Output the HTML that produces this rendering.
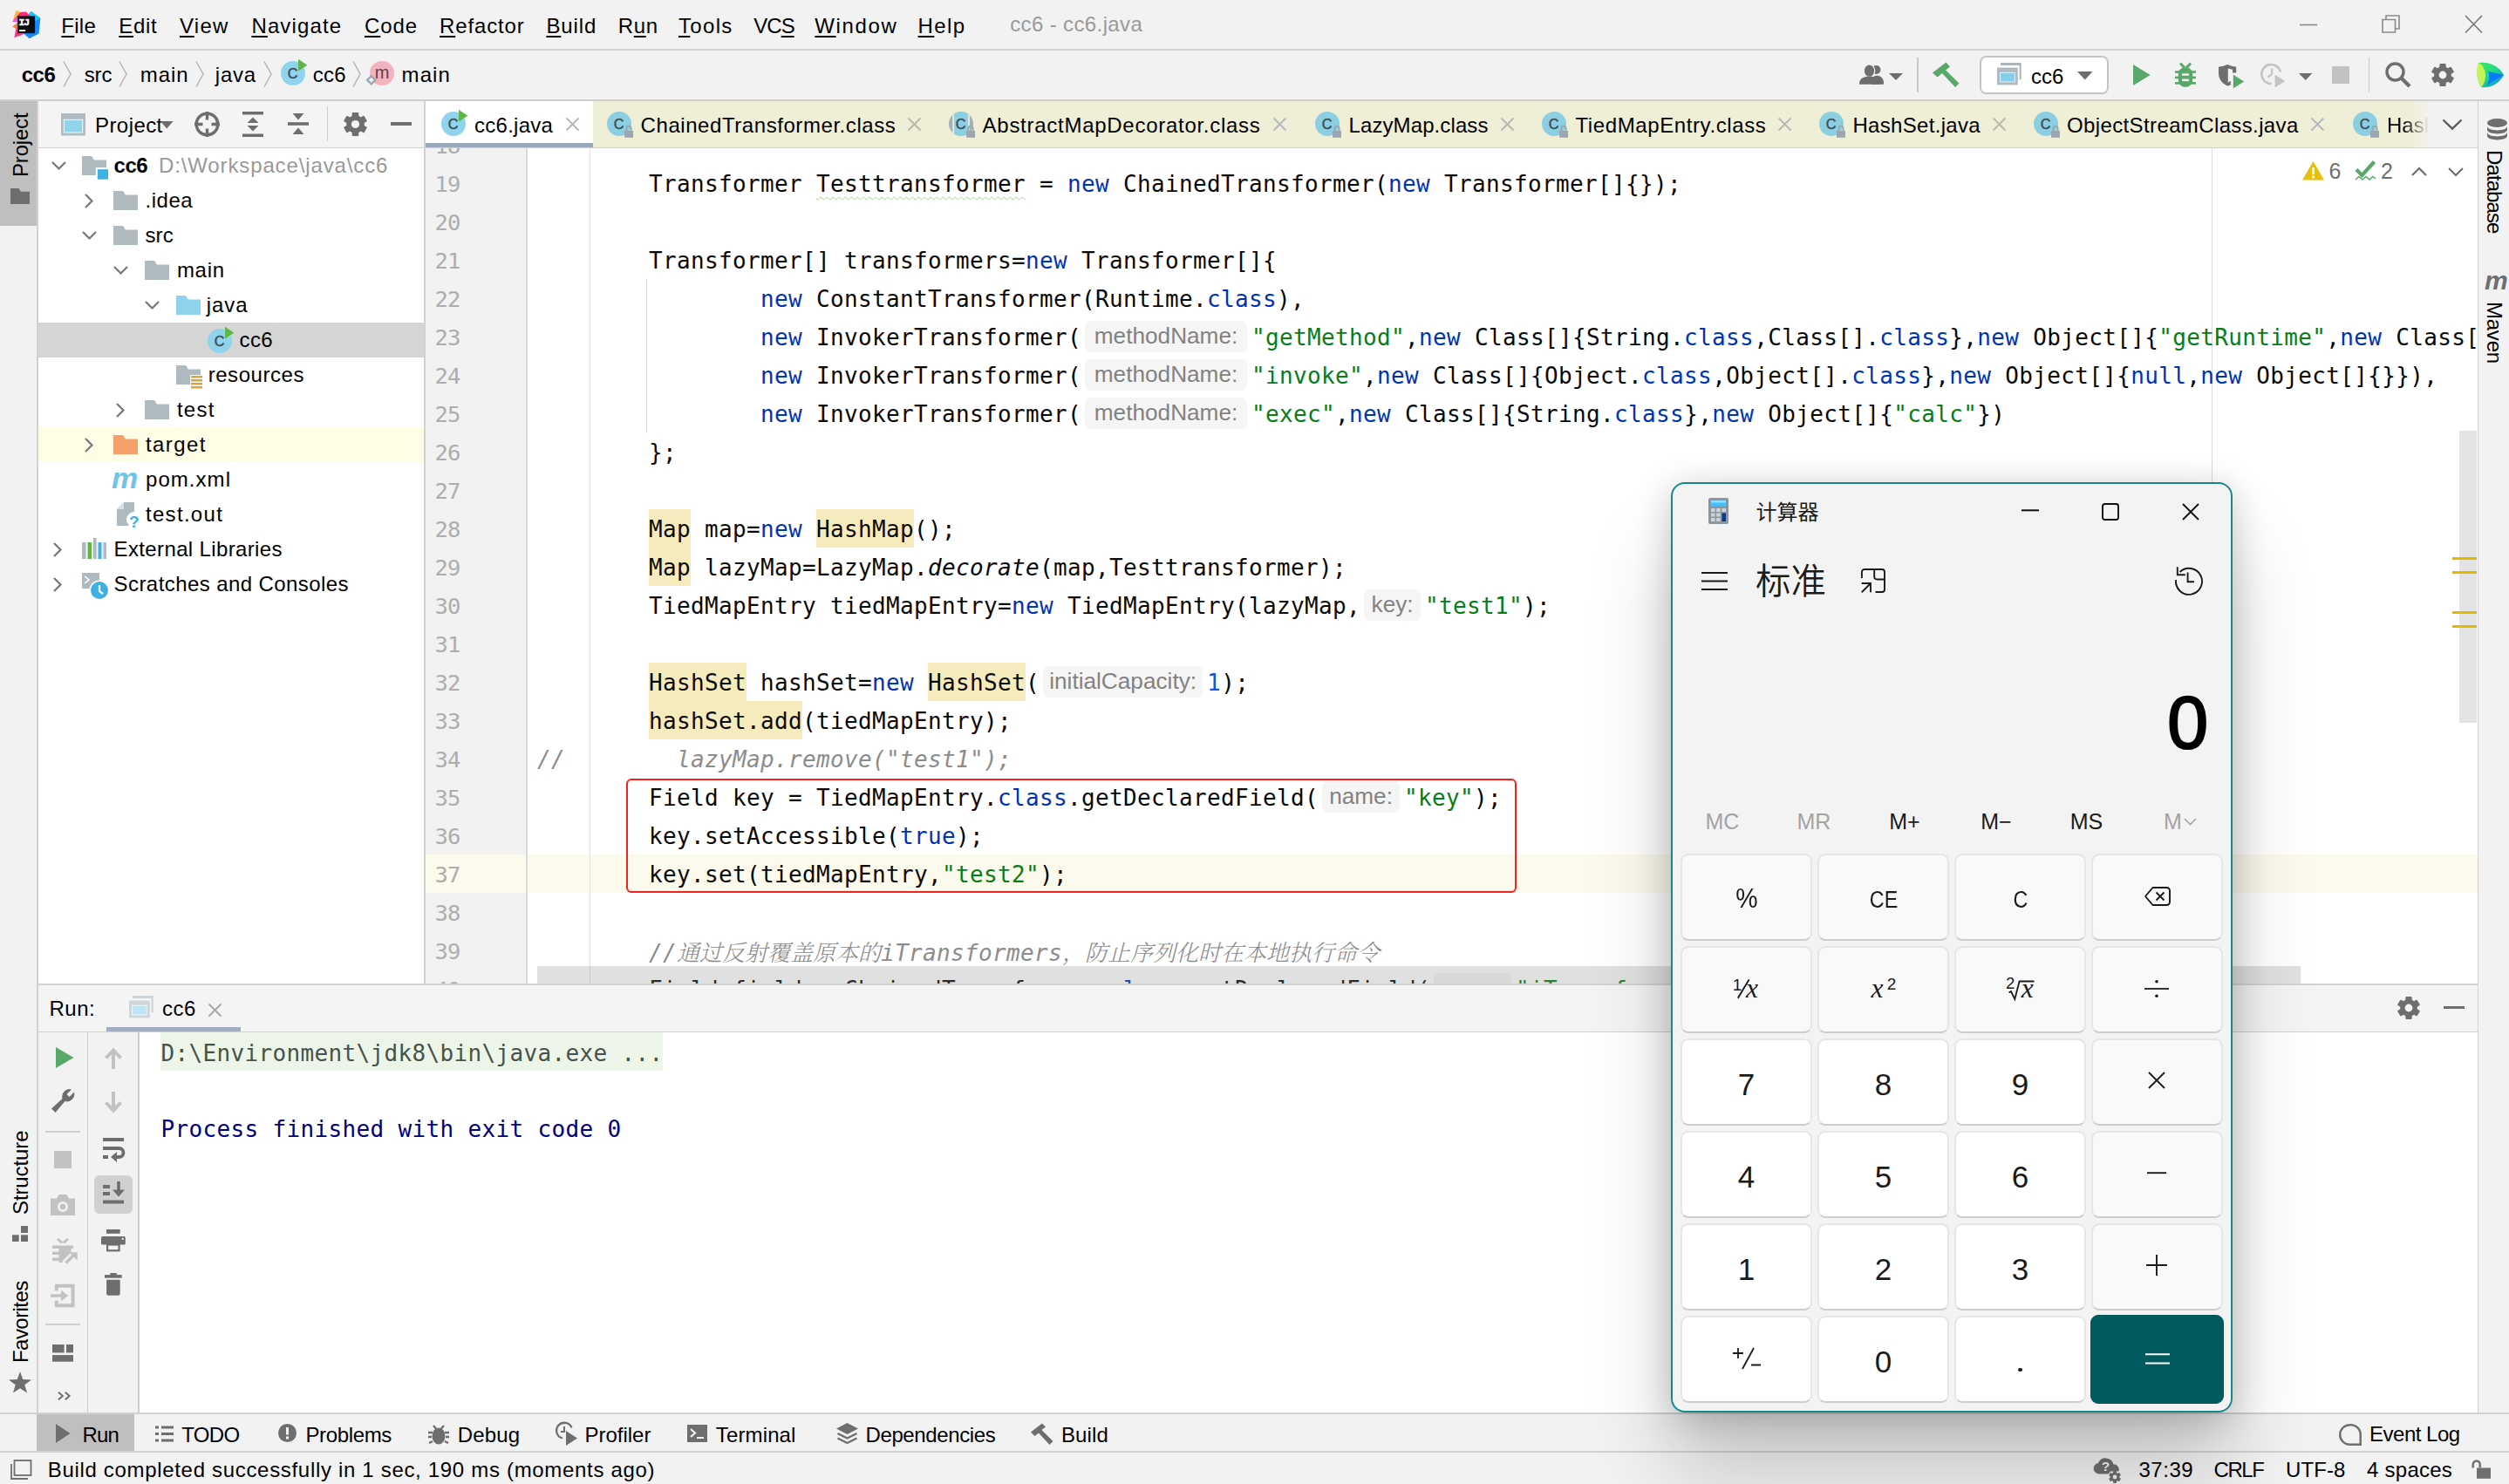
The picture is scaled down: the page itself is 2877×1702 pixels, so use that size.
<!DOCTYPE html>
<html lang="en"><head><meta charset="utf-8"><title>cc6 - cc6.java</title>
<style>
html,body{margin:0;padding:0;}
body{width:2877px;height:1702px;overflow:hidden;position:relative;background:#f2f2f2;font-family:'Liberation Sans', 'Noto Sans CJK SC', sans-serif;}
div,span.t,svg{position:absolute;}
svg{overflow:visible;}
span.t{white-space:pre;line-height:1;}
.code{font-family:'DejaVu Sans Mono', 'Liberation Mono', 'Noto Sans CJK SC', monospace;font-size:26px;letter-spacing:0.347px;white-space:pre;line-height:46px;height:44px;color:#080808;}
.code span{position:static;}
.k{color:#0033b3;} .s{color:#067d17;} .n{color:#1750eb;} .c{color:#8c8c8c;font-style:italic;}
.w{background:#f6ebbc;display:inline-block;height:44px;vertical-align:top;}
.h{display:inline-block;vertical-align:top;position:relative !important;height:36px;margin:4px 5px 0 4px;border-radius:6.5px;background:#f5f5f5;color:#828282;font-family:'Liberation Sans', 'Noto Sans CJK SC', sans-serif;font-size:26.2px;letter-spacing:0;line-height:35px;text-align:center;font-style:normal;}
.zh{font-family:"Noto Serif CJK SC","Noto Sans CJK SC",serif;letter-spacing:0;font-weight:300;}
</style></head>
<body>
<div style="left:0px;top:0px;width:2877px;height:57px;background:#f2f2f2;"></div>
<div style="left:0px;top:56.3px;width:2877px;height:1.8px;background:#d3d3d3;"></div>
<svg style="left:13.9px;top:11.7px;" width="33" height="33" viewBox="0 0 33 33">
<polygon points="1,10.8 4.3,0.2 8.6,0.7 7,8" fill="#fdb73e"/>
<polygon points="0.2,12.7 9,2 15.8,1.4 19.8,5.2 8,13" fill="#ff2e6f"/>
<polygon points="0.2,12.7 7,6.6 7,13.5" fill="#fe4fe6"/>
<polygon points="0.2,18.7 6.4,13.6 6.4,22" fill="#fd7d20"/>
<polygon points="2.4,31.3 4.6,19 7,26 15,26.5" fill="#ff2f86"/>
<polygon points="19.1,4.5 21.5,1 32.3,8.8 30.6,26.5 19.6,32.3 13,26.3" fill="#1689ff"/>
<polygon points="19.1,4.5 21.5,1 32.3,8.8 27,12" fill="#16c4fb"/>
<rect x="6.2" y="6.4" width="19.9" height="19.8" fill="#0b0b0f"/>
<rect x="8.1" y="22.2" width="7" height="1.8" fill="#fff"/>
<text x="7.5" y="16.5" font-size="11.5" font-weight="bold" fill="#fff" stroke="#fff" stroke-width="0.4" font-family="Liberation Mono, DejaVu Sans Mono, monospace" letter-spacing="-1.2">IJ</text>
</svg>
<span class="t" id="t1" style="left:70.3px;top:17.98px;font-size:24px;color:#000;letter-spacing:0.289px;"><u style="text-decoration-thickness:2px;text-underline-offset:3px">F</u>ile</span>
<span class="t" id="t2" style="left:136.3px;top:17.98px;font-size:24px;color:#000;letter-spacing:0.664px;"><u style="text-decoration-thickness:2px;text-underline-offset:3px">E</u>dit</span>
<span class="t" id="t3" style="left:206px;top:17.98px;font-size:24px;color:#000;letter-spacing:1.259px;"><u style="text-decoration-thickness:2px;text-underline-offset:3px">V</u>iew</span>
<span class="t" id="t4" style="left:288.4px;top:17.98px;font-size:24px;color:#000;letter-spacing:1.142px;"><u style="text-decoration-thickness:2px;text-underline-offset:3px">N</u>avigate</span>
<span class="t" id="t5" style="left:418px;top:17.98px;font-size:24px;color:#000;letter-spacing:0.888px;"><u style="text-decoration-thickness:2px;text-underline-offset:3px">C</u>ode</span>
<span class="t" id="t6" style="left:504px;top:17.98px;font-size:24px;color:#000;letter-spacing:0.864px;"><u style="text-decoration-thickness:2px;text-underline-offset:3px">R</u>efactor</span>
<span class="t" id="t7" style="left:626.4px;top:17.98px;font-size:24px;color:#000;letter-spacing:0.917px;"><u style="text-decoration-thickness:2px;text-underline-offset:3px">B</u>uild</span>
<span class="t" id="t8" style="left:708.8px;top:17.98px;font-size:24px;color:#000;letter-spacing:0.655px;">R<u style="text-decoration-thickness:2px;text-underline-offset:3px">u</u>n</span>
<span class="t" id="t9" style="left:778px;top:17.98px;font-size:24px;color:#000;letter-spacing:1.326px;"><u style="text-decoration-thickness:2px;text-underline-offset:3px">T</u>ools</span>
<span class="t" id="t10" style="left:864.3px;top:17.98px;font-size:24px;color:#000;letter-spacing:-0.984px;">VC<u style="text-decoration-thickness:2px;text-underline-offset:3px">S</u></span>
<span class="t" id="t11" style="left:934.3px;top:17.98px;font-size:24px;color:#000;letter-spacing:1.659px;"><u style="text-decoration-thickness:2px;text-underline-offset:3px">W</u>indow</span>
<span class="t" id="t12" style="left:1052.6px;top:17.98px;font-size:24px;color:#000;letter-spacing:1.407px;"><u style="text-decoration-thickness:2px;text-underline-offset:3px">H</u>elp</span>
<span class="t" id="t13" style="left:1158.2px;top:16.28px;font-size:24px;color:#9a9a9a;letter-spacing:0.376px;">cc6 - cc6.java</span>
<svg style="left:2637px;top:18px;" width="20" height="20" viewBox="0 0 20 20"><path d="M0 10.5H20" stroke="#8a8a8a" stroke-width="1.6" fill="none"/></svg>
<svg style="left:2731px;top:17px;" width="21" height="21" viewBox="0 0 21 21"><path d="M1 5.5H15.5V20H1Z M5 5V1H20V16H16" stroke="#8a8a8a" stroke-width="1.6" fill="none"/></svg>
<svg style="left:2826px;top:18px;" width="21" height="20" viewBox="0 0 21 20"><path d="M1 0L20 19.5M20 0L1 19.5" stroke="#777" stroke-width="1.6" fill="none"/></svg>
<div style="left:0px;top:58px;width:2877px;height:57px;background:#f2f2f2;"></div>
<div style="left:0px;top:114.3px;width:2877px;height:1.7px;background:#cfcfcf;"></div>
<span class="t" id="t14" style="left:24.7px;top:73.98px;font-size:24px;color:#000;font-weight:bold;letter-spacing:-0.499px;">cc6</span>
<span class="t" id="t15" style="left:96.7px;top:73.98px;font-size:24px;color:#000;letter-spacing:-0.080px;">src</span>
<span class="t" id="t16" style="left:160.7px;top:73.98px;font-size:24px;color:#000;letter-spacing:0.962px;">main</span>
<span class="t" id="t17" style="left:246.8px;top:73.98px;font-size:24px;color:#000;letter-spacing:0.763px;">java</span>
<span class="t" id="t18" style="left:358.7px;top:73.98px;font-size:24px;color:#000;letter-spacing:0.336px;">cc6</span>
<span class="t" id="t19" style="left:460.5px;top:73.98px;font-size:24px;color:#000;letter-spacing:1.134px;">main</span>
<svg style="left:72px;top:70px;" width="10" height="30" viewBox="0 0 10 30"><path d="M1 0.5L9 15L1 29.5" stroke="#b4b4b4" stroke-width="1.5" fill="none"/></svg>
<svg style="left:136px;top:70px;" width="10" height="30" viewBox="0 0 10 30"><path d="M1 0.5L9 15L1 29.5" stroke="#b4b4b4" stroke-width="1.5" fill="none"/></svg>
<svg style="left:224px;top:70px;" width="10" height="30" viewBox="0 0 10 30"><path d="M1 0.5L9 15L1 29.5" stroke="#b4b4b4" stroke-width="1.5" fill="none"/></svg>
<svg style="left:302px;top:70px;" width="10" height="30" viewBox="0 0 10 30"><path d="M1 0.5L9 15L1 29.5" stroke="#b4b4b4" stroke-width="1.5" fill="none"/></svg>
<svg style="left:404px;top:70px;" width="10" height="30" viewBox="0 0 10 30"><path d="M1 0.5L9 15L1 29.5" stroke="#b4b4b4" stroke-width="1.5" fill="none"/></svg>
<svg style="left:322px;top:70px;" width="28" height="28" viewBox="0 0 28 28"><circle cx="14" cy="14" r="14" fill="#8fd3ec"/><text x="13.6" y="19.8" text-anchor="middle" font-size="16.2" fill="#3d4f59" stroke="#3d4f59" stroke-width="0.5" font-family="Liberation Sans, sans-serif">C</text><path d="M20 -2.2L20 11.5L30.3 4.8Z" fill="#5fb545"/></svg>
<svg style="left:424px;top:70px;" width="28" height="28" viewBox="0 0 28 28"><circle cx="14" cy="14" r="14" fill="#f4b2be"/><text x="14" y="20" text-anchor="middle" font-size="20" fill="#6b3a43" font-family="Liberation Sans, sans-serif">m</text><rect x="-1.5" y="18.5" width="6.5" height="6.5" transform="rotate(45 1.75 21.75)" fill="#f2f2f2" stroke="#9aa7b0" stroke-width="2.4"/></svg>
<svg style="left:2131.8px;top:73.9px;" width="50" height="23" viewBox="0 0 50 23"><circle cx="19.5" cy="6" r="5" fill="#6e6e6e"/><path d="M14 22.7c0-7 2-10 6-10s8 2.5 8 8.5v1.5z" fill="#6e6e6e"/><ellipse cx="11.5" cy="7.2" rx="6.2" ry="7.2" fill="#6e6e6e" stroke="#f2f2f2" stroke-width="1.2"/><path d="M0 22.7c0-6.5 4-9 11.5-9s12.5 2.5 12.5 9z" fill="#6e6e6e" stroke="#f2f2f2" stroke-width="0"/><path d="M34 10h16l-8 8z" fill="#6e6e6e"/></svg>
<div style="left:2198px;top:66px;width:1.8px;height:40px;background:#c9c9c9;"></div>
<svg style="left:2216px;top:71px;" width="31" height="29" viewBox="0 0 31 29"><path d="M0 12.5L15.5 0.5L20 5.5L15 9.5L30.5 24.5L26 29L11 13L5.5 17.5Z" fill="#59a869"/></svg>
<div style="left:2270px;top:64px;width:147.5px;height:43.5px;background:#fff;border:2px solid #c4c4c4;border-radius:7.5px;box-sizing:border-box;"></div>
<svg style="left:2290px;top:72.4px;" width="28" height="26" viewBox="0 0 28 26"><path d="M4 0H27.7V19.2H25.6V3H4Z" fill="#aab5bd"/><rect x="0" y="5.6" width="23.8" height="19.8" fill="#b0bac1"/><rect x="3" y="10.8" width="17.8" height="11.6" fill="#e3f2f9"/><rect x="4" y="11.8" width="15.8" height="9.6" fill="#87ceeb"/></svg>
<span class="t" id="t20" style="left:2329px;top:76.18px;font-size:24px;color:#000;letter-spacing:0.056px;">cc6</span>
<svg style="left:2381.5px;top:82px;" width="18" height="10" viewBox="0 0 18 10"><path d="M0 0h17.500l-8.750 9.500z" fill="#6e6e6e"/></svg>
<svg style="left:2446px;top:74px;" width="20" height="24" viewBox="0 0 20 24"><path d="M0 0L19.7 12L0 24Z" fill="#59a869"/></svg>
<svg style="left:2494px;top:72px;" width="24" height="28" viewBox="0 0 24 28"><path d="M6 0.6L11 5.6M18 0.6L13 5.6" stroke="#59a869" stroke-width="2.9" fill="none"/><path d="M12 5.2c5 0 8.2 3.2 8.2 7.5v6.5c0 5-3.6 8.6-8.2 8.6s-8.2-3.6-8.2-8.6v-6.5c0-4.300 3.200-7.500 8.200-7.500z" fill="#59a869"/><rect x="0" y="9.2" width="24" height="2.7" fill="#59a869"/><rect x="0" y="15.6" width="24" height="2.7" fill="#59a869"/><rect x="0" y="22" width="24" height="2.7" fill="#59a869"/><rect x="8.1" y="12.3" width="7.8" height="2.5" fill="#f2f2f2"/><rect x="8.1" y="18.6" width="7.8" height="2.5" fill="#f2f2f2"/></svg>
<svg style="left:2543.8px;top:73.5px;" width="31" height="29" viewBox="0 0 31 29"><path d="M0 2.8Q5.500 2 10.200 0Q15 2 20.200 2.800V9.500H16V5.800L10.800 4.600V20.800L13.800 18.800V23.500L10.200 24.500C4 21.500 0 17 0 10Z" fill="#6e6e6e"/><path d="M16.2 10.500L30.200 19.500L16.200 28.500Z" fill="#59a869" stroke="#f2f2f2" stroke-width="1.2"/></svg>
<svg style="left:2591px;top:72px;" width="32" height="30" viewBox="0 0 32 30"><path d="M24 10.500A11 11 0 1 0 13.500 24" fill="none" stroke="#c4c4c4" stroke-width="2.600"/><path d="M14.200 6.500V13L9.500 16.500" stroke="#c4c4c4" stroke-width="2.200" fill="none"/><path d="M17 12.500L30.500 21L17 29.500Z" fill="#c4c4c4" stroke="#f2f2f2" stroke-width="1.200"/></svg>
<svg style="left:2636.3px;top:83.9px;" width="16" height="8" viewBox="0 0 16 8"><path d="M0 0h15.4l-7.7 7.900z" fill="#6e6e6e"/></svg>
<div style="left:2674px;top:76px;width:20px;height:20px;background:#c2c2c2;"></div>
<div style="left:2715.6px;top:66px;width:1.8px;height:40px;background:#c9c9c9;"></div>
<svg style="left:2735px;top:71px;" width="30" height="30" viewBox="0 0 30 30"><circle cx="11.5" cy="11.5" r="9.5" fill="none" stroke="#6e6e6e" stroke-width="3.4"/><path d="M18 18L28 28" stroke="#6e6e6e" stroke-width="4.2"/></svg>
<svg style="left:2788px;top:73px;" width="26" height="26" viewBox="0 0 26 26"><g transform="translate(13 13)"><circle r="9.9" fill="#6e6e6e"/><rect x="-3.64" y="-13" width="7.28" height="26" rx="1" transform="rotate(0)" fill="#6e6e6e"/><rect x="-3.64" y="-13" width="7.28" height="26" rx="1" transform="rotate(60)" fill="#6e6e6e"/><rect x="-3.64" y="-13" width="7.28" height="26" rx="1" transform="rotate(120)" fill="#6e6e6e"/><circle r="4.4" fill="#f2f2f2"/></g></svg>
<svg style="left:2839px;top:70px;" width="32" height="32" viewBox="0 0 32 32"><defs><linearGradient id="lg1" x1="0" y1="0" x2="1" y2="1"><stop offset="0" stop-color="#3bea62"/><stop offset="0.5" stop-color="#21d789"/><stop offset="1" stop-color="#087cfa"/></linearGradient></defs><path d="M3 2C18 0 28 8 32 16C28 24 18 32 6 30C1 22 0 10 3 2Z" fill="url(#lg1)"/><path d="M3 2C12 6 14 22 6 30C1 22 0 10 3 2Z" fill="#fcf84a" opacity="0.75"/><path d="M14 12L32 16L12 28C16 22 16 16 14 12Z" fill="#087cfa"/></svg>
<div style="left:0px;top:116px;width:42px;height:1505px;background:#f2f2f2;"></div>
<div style="left:42px;top:116px;width:1.5px;height:1505px;background:#d1d1d1;"></div>
<div style="left:0px;top:116px;width:42px;height:143px;background:#bfbfbf;"></div>
<span class="t" id="t21" style="left:12.08px;top:203px;font-size:24px;color:#000;transform-origin:0 0;transform:rotate(-90deg);letter-spacing:-0.185px;">Project</span>
<svg style="left:12px;top:216px;" width="22" height="18" viewBox="0 0 22 18"><path d="M0 0H9.5L12 3.7H22V18H0Z" fill="#6e6e6e"/></svg>
<span class="t" id="t22" style="left:12.08px;top:1392.5px;font-size:24px;color:#000;transform-origin:0 0;transform:rotate(-90deg);letter-spacing:-0.103px;">Structure</span>
<svg style="left:14px;top:1406px;" width="18" height="18" viewBox="0 0 18 18"><rect x="10" y="0" width="8" height="8" fill="#6e6e6e"/><rect x="0" y="10.3" width="7.7" height="7.7" fill="#6e6e6e"/><rect x="10" y="10.3" width="8" height="7.7" fill="#6e6e6e"/></svg>
<span class="t" id="t23" style="left:12.28px;top:1562.5px;font-size:24px;color:#000;transform-origin:0 0;transform:rotate(-90deg);letter-spacing:-0.553px;">Favorites</span>
<svg style="left:10px;top:1572.5px;" width="26" height="24.5" viewBox="0 0 26 24.5"><path d="M13 0L16.2 9L26 9.4L18.3 15.3L21 24.5L13 19.2L5 24.5L7.7 15.3L0 9.4L9.8 9Z" fill="#6e6e6e"/></svg>
<div style="left:2841px;top:116px;width:36px;height:1505px;background:#f2f2f2;"></div>
<div style="left:2840.5px;top:116px;width:1.5px;height:1505px;background:#d1d1d1;"></div>
<svg style="left:2851.5px;top:136px;" width="23" height="25" viewBox="0 0 23 25"><ellipse cx="11.5" cy="5" rx="11.5" ry="5" fill="#6e6e6e"/><path d="M0 8.5c0 6.5 23 6.5 23 0v4c0 6.5-23 6.5-23 0zM0 15.5c0 6.5 23 6.5 23 0v4c0 6.5-23 6.5-23 0z" fill="#6e6e6e"/></svg>
<span class="t" id="t24" style="left:2872.12px;top:171.5px;font-size:24px;color:#000;transform-origin:0 0;transform:rotate(90deg);letter-spacing:-0.900px;">Database</span>
<span class="t" id="t25" style="left:2849px;top:306.60px;font-size:30px;color:#6e6e6e;font-weight:bold;font-style:italic;">m</span>
<span class="t" id="t26" style="left:2872.12px;top:345.5px;font-size:24px;color:#000;transform-origin:0 0;transform:rotate(90deg);letter-spacing:-0.233px;">Maven</span>
<div style="left:0px;top:1621px;width:2877px;height:44px;background:#f2f2f2;"></div>
<div style="left:0px;top:1620px;width:2877px;height:1.5px;background:#d1d1d1;"></div>
<div style="left:42px;top:1621.5px;width:112px;height:43px;background:#bfbfbf;"></div>
<svg style="left:64px;top:1633px;" width="17" height="22" viewBox="0 0 17 22"><path d="M0 0L16.5 11L0 22Z" fill="#6e6e6e"/></svg>
<span class="t" id="t27" style="left:94.6px;top:1634.18px;font-size:24px;color:#000;letter-spacing:-0.893px;">Run</span>
<svg style="left:177.5px;top:1635px;" width="21" height="19" viewBox="0 0 21 19"><path d="M0 2h4M0 9.5h4M0 17h4M7 2h14M7 9.5h14M7 17h14" stroke="#6e6e6e" stroke-width="3"/></svg>
<span class="t" id="t28" style="left:208.3px;top:1634.18px;font-size:24px;color:#000;letter-spacing:-0.688px;">TODO</span>
<svg style="left:319px;top:1633px;" width="21" height="21" viewBox="0 0 21 21"><circle cx="10.5" cy="10.5" r="10.5" fill="#6e6e6e"/><rect x="9" y="4" width="3" height="8.5" fill="#f2f2f2"/><rect x="9" y="14.5" width="3" height="3" fill="#f2f2f2"/></svg>
<span class="t" id="t29" style="left:350.4px;top:1634.18px;font-size:24px;color:#000;letter-spacing:-0.343px;">Problems</span>
<svg style="left:491px;top:1632px;" width="24" height="25" viewBox="0 0 24 25"><ellipse cx="12" cy="15" rx="7.5" ry="9.5" fill="#6e6e6e"/><path d="M6 3l3.5 4M18 3l-3.5 4M0 11h5M0 16h4M1 23l4-2M24 11h-5M24 16h-4M23 23l-4-2" stroke="#6e6e6e" stroke-width="2.3" fill="none"/></svg>
<span class="t" id="t30" style="left:524.7px;top:1634.18px;font-size:24px;color:#000;letter-spacing:0.148px;">Debug</span>
<svg style="left:636.5px;top:1631px;" width="26" height="27" viewBox="0 0 26 27"><path d="M18.5 6.5A9 9 0 1 0 8 18.5" fill="none" stroke="#6e6e6e" stroke-width="2.3"/><path d="M10 5v6h-4" stroke="#6e6e6e" stroke-width="2" fill="none"/><path d="M12 10L12 27L25 18.5Z" fill="#6e6e6e"/></svg>
<span class="t" id="t31" style="left:670.4px;top:1634.18px;font-size:24px;color:#000;letter-spacing:0.009px;">Profiler</span>
<svg style="left:788px;top:1634px;" width="23" height="20" viewBox="0 0 23 20"><rect width="23" height="20" fill="#6e6e6e"/><path d="M4 5l5 4.5L4 14M11 15h8" stroke="#f2f2f2" stroke-width="2.2" fill="none"/></svg>
<span class="t" id="t32" style="left:820.8px;top:1634.18px;font-size:24px;color:#000;letter-spacing:0.133px;">Terminal</span>
<svg style="left:959px;top:1632px;" width="25" height="25" viewBox="0 0 25 25"><path d="M12.5 0L25 6.5L12.5 13L0 6.5Z" fill="#6e6e6e"/><path d="M1.5 12L12.5 17.5L23.5 12M1.5 17.5L12.5 23L23.5 17.5" stroke="#6e6e6e" stroke-width="2.4" fill="none"/></svg>
<span class="t" id="t33" style="left:992.5px;top:1634.18px;font-size:24px;color:#000;letter-spacing:-0.387px;">Dependencies</span>
<svg style="left:1182px;top:1632px;" width="26" height="25" viewBox="0 0 26 25"><path d="M0 10.5L13 0.5L17 4.5L12.5 8L25.5 21L21.5 25L9 11.5L4.5 15Z" fill="#6e6e6e"/></svg>
<span class="t" id="t34" style="left:1216.9px;top:1634.18px;font-size:24px;color:#000;letter-spacing:0.161px;">Build</span>
<svg style="left:2682px;top:1632.5px;" width="26" height="25" viewBox="0 0 26 25"><path d="M12.5 1.2A11.3 11.3 0 1 0 12.5 23.8H24.7V13.4A11.3 11.3 0 0 0 12.5 1.2Z" fill="none" stroke="#6e6e6e" stroke-width="2.4"/></svg>
<span class="t" id="t35" style="left:2717px;top:1632.88px;font-size:24px;color:#000;letter-spacing:-0.493px;">Event Log</span>
<div style="left:0px;top:1665px;width:2877px;height:37px;background:#f2f2f2;"></div>
<div style="left:0px;top:1664px;width:2877px;height:1.5px;background:#d1d1d1;"></div>
<svg style="left:12px;top:1674px;" width="25" height="24" viewBox="0 0 25 24"><rect x="4.5" y="1" width="19" height="17" fill="none" stroke="#6e6e6e" stroke-width="1.8"/><path d="M1 5V22H20" fill="none" stroke="#6e6e6e" stroke-width="1.8"/></svg>
<span class="t" id="t36" style="left:54.7px;top:1673.88px;font-size:24px;color:#000;letter-spacing:0.682px;">Build completed successfully in 1 sec, 190 ms (moments ago)</span>
<svg style="left:2399.5px;top:1672px;" width="31" height="19" viewBox="0 0 31 19"><path d="M6.5 18.5a6.3 6.3 0 0 1-0.6-12.5a9.3 9.3 0 0 1 17.6 1.6a5.6 5.6 0 0 1 6.3 5.6c0 1-0.2 1.6-0.5 2.2h-9.3l-2.5 3.1z" fill="#6e6e6e"/><text x="9.8" y="15.3" font-size="15.5" font-weight="bold" fill="#f2f2f2" font-family="Liberation Sans, sans-serif">?</text></svg>
<svg style="left:2418.3px;top:1687px;" width="14" height="14" viewBox="0 0 14 14"><g transform="translate(7 7)"><circle r="5.3" fill="#6e6e6e"/><rect x="-1.96" y="-7" width="3.92" height="14" rx="1" transform="rotate(0)" fill="#6e6e6e"/><rect x="-1.96" y="-7" width="3.92" height="14" rx="1" transform="rotate(60)" fill="#6e6e6e"/><rect x="-1.96" y="-7" width="3.92" height="14" rx="1" transform="rotate(120)" fill="#6e6e6e"/><circle r="2.4" fill="#f2f2f2"/></g></svg>
<span class="t" id="t37" style="left:2452.5px;top:1673.88px;font-size:24px;color:#000;letter-spacing:0.519px;">37:39</span>
<span class="t" id="t38" style="left:2538.6px;top:1673.88px;font-size:24px;color:#000;letter-spacing:-1.478px;">CRLF</span>
<span class="t" id="t39" style="left:2621px;top:1673.88px;font-size:24px;color:#000;letter-spacing:0.111px;">UTF-8</span>
<span class="t" id="t40" style="left:2714px;top:1673.88px;font-size:24px;color:#000;letter-spacing:0.258px;">4 spaces</span>
<svg style="left:2834px;top:1673px;" width="23" height="24" viewBox="0 0 23 24"><rect x="6" y="10.5" width="16" height="12.3" fill="#6e6e6e"/><path d="M1.7 10.5V6.5a4 4 0 0 1 8 0V10.5" fill="none" stroke="#6e6e6e" stroke-width="2.4"/></svg>
<div style="left:44px;top:116px;width:442px;height:53px;background:#f4f4f4;"></div>
<div style="left:44px;top:168.5px;width:442px;height:1.5px;background:#d1d1d1;"></div>
<div style="left:44px;top:170px;width:442px;height:958px;background:#fff;"></div>
<div style="left:486px;top:116px;width:2px;height:1012px;background:#d1d1d1;"></div>
<svg style="left:70px;top:130px;" width="28" height="25.5" viewBox="0 0 28 25.5"><rect x="0" y="0" width="28" height="25.500" fill="#b1bac0"/><rect x="2.800" y="6.800" width="22.400" height="15.800" fill="#e6f3f9"/><rect x="4" y="8" width="20" height="13.400" fill="#8fd3ec"/></svg>
<span class="t" id="t41" style="left:109px;top:132.28px;font-size:24px;color:#000;letter-spacing:0.430px;">Project</span>
<svg style="left:183.5px;top:139px;" width="15" height="9" viewBox="0 0 15 9"><path d="M0 0h14.5l-7.25 8.5z" fill="#6e6e6e"/></svg>
<svg style="left:223px;top:127.8px;" width="29" height="29" viewBox="0 0 29 29"><circle cx="14.500" cy="14.500" r="12.300" fill="none" stroke="#6e6e6e" stroke-width="3.400"/><path d="M14.500 0v9.500M14.500 19.500v9.500M0 14.500h9.500M19.500 14.500h9.500" stroke="#6e6e6e" stroke-width="3.400"/></svg>
<svg style="left:278px;top:127.5px;" width="24" height="29" viewBox="0 0 24 29"><path d="M0 1.800h24M0 27.200h24" stroke="#6e6e6e" stroke-width="3.600"/><path d="M12 6.500l6.500 6.500h-13zM12 22.500l6.500-6.500h-13z" fill="#6e6e6e"/></svg>
<svg style="left:329.5px;top:127px;" width="24" height="30" viewBox="0 0 24 30"><path d="M0 15h24" stroke="#6e6e6e" stroke-width="3.600"/><path d="M12 10.500l6.500-7.500h-13zM12 19.500l6.500 7.500h-13z" fill="#6e6e6e"/></svg>
<div style="left:374.5px;top:122px;width:1.2px;height:40px;background:#cfcfcf;"></div>
<svg style="left:394.0px;top:128.5px;" width="27.0" height="27.0" viewBox="0 0 27.0 27.0"><g transform="translate(13.5 13.5)"><circle r="10.3" fill="#6e6e6e"/><rect x="-3.78" y="-13.5" width="7.56" height="27.0" rx="1" transform="rotate(0)" fill="#6e6e6e"/><rect x="-3.78" y="-13.5" width="7.56" height="27.0" rx="1" transform="rotate(60)" fill="#6e6e6e"/><rect x="-3.78" y="-13.5" width="7.56" height="27.0" rx="1" transform="rotate(120)" fill="#6e6e6e"/><circle r="4.6" fill="#f4f4f4"/></g></svg>
<div style="left:447.5px;top:140.3px;width:24.5px;height:3.4px;background:#6e6e6e;"></div>
<div style="left:44px;top:370px;width:442px;height:40px;background:#d5d5d5;"></div>
<div style="left:44px;top:490px;width:442px;height:40px;background:#fffde6;"></div>
<svg style="left:59px;top:185px;" width="17" height="10" viewBox="0 0 17 10"><path d="M1 1L8.5 8.5L16 1" stroke="#767676" stroke-width="2.2" fill="none"/></svg>
<svg style="left:94px;top:178.5px;" width="31" height="28" viewBox="0 0 31 28"><path d="M0 0H11L14 4.5H28V22H0Z" fill="#aeb9c0"/><rect x="15.800" y="13.200" width="14.200" height="13.500" fill="#fff"/><rect x="17.800" y="15.200" width="12.200" height="11.500" fill="#3fb1e0"/></svg>
<span class="t" id="t42" style="left:130.6px;top:178.28px;font-size:24px;color:#000;font-weight:bold;letter-spacing:-0.459px;">cc6</span>
<span class="t" id="t43" style="left:182px;top:178.28px;font-size:24px;color:#999;letter-spacing:0.869px;">D:\Workspace\java\cc6</span>
<svg style="left:97px;top:221.5px;" width="10" height="17" viewBox="0 0 10 17"><path d="M1 1L8.5 8.5L1 16" stroke="#767676" stroke-width="2.2" fill="none"/></svg>
<svg style="left:130px;top:218.5px;" width="28" height="22" viewBox="0 0 28 22"><path d="M0 0H11L14 4.5H28V22H0Z" fill="#aeb9c0"/></svg>
<span class="t" id="t44" style="left:166.4px;top:218.28px;font-size:24px;color:#000;letter-spacing:0.567px;">.idea</span>
<svg style="left:94px;top:265px;" width="17" height="10" viewBox="0 0 17 10"><path d="M1 1L8.5 8.5L16 1" stroke="#767676" stroke-width="2.2" fill="none"/></svg>
<svg style="left:130px;top:258.5px;" width="28" height="22" viewBox="0 0 28 22"><path d="M0 0H11L14 4.5H28V22H0Z" fill="#aeb9c0"/></svg>
<span class="t" id="t45" style="left:166.4px;top:258.28px;font-size:24px;color:#000;letter-spacing:0.200px;">src</span>
<svg style="left:130px;top:305px;" width="17" height="10" viewBox="0 0 17 10"><path d="M1 1L8.5 8.5L16 1" stroke="#767676" stroke-width="2.2" fill="none"/></svg>
<svg style="left:166px;top:298.5px;" width="28" height="22" viewBox="0 0 28 22"><path d="M0 0H11L14 4.5H28V22H0Z" fill="#aeb9c0"/></svg>
<span class="t" id="t46" style="left:202.9px;top:298.28px;font-size:24px;color:#000;letter-spacing:0.734px;">main</span>
<svg style="left:166px;top:345px;" width="17" height="10" viewBox="0 0 17 10"><path d="M1 1L8.5 8.5L16 1" stroke="#767676" stroke-width="2.2" fill="none"/></svg>
<svg style="left:201.7px;top:338.5px;" width="28" height="22" viewBox="0 0 28 22"><path d="M0 0H11L14 4.5H28V22H0Z" fill="#8fd3ec"/></svg>
<span class="t" id="t47" style="left:236.7px;top:338.28px;font-size:24px;color:#000;letter-spacing:0.962px;">java</span>
<svg style="left:238px;top:376.5px;" width="28" height="28" viewBox="0 0 28 28"><circle cx="14" cy="14" r="14" fill="#8fd3ec"/><text x="13.6" y="19.8" text-anchor="middle" font-size="16.2" fill="#3d4f59" stroke="#3d4f59" stroke-width="0.5" font-family="Liberation Sans, sans-serif">C</text><path d="M20 -2.2L20 11.5L30.3 4.8Z" fill="#5fb545"/></svg>
<span class="t" id="t48" style="left:274.6px;top:378.28px;font-size:24px;color:#000;letter-spacing:0.336px;">cc6</span>
<svg style="left:201.7px;top:418.5px;" width="28" height="22" viewBox="0 0 28 22"><path d="M0 0H11L14 4.5H28V22H0Z" fill="#aeb9c0"/></svg>
<svg style="left:219px;top:431px;" width="13" height="15" viewBox="0 0 13 15"><rect x="-1" y="-1" width="15" height="17" fill="#fff"/><path d="M0 1.2h13M0 5.2h13M0 9.2h13M0 13.2h13" stroke="#dba33b" stroke-width="2.4"/></svg>
<span class="t" id="t49" style="left:238.7px;top:418.28px;font-size:24px;color:#000;letter-spacing:0.544px;">resources</span>
<svg style="left:133px;top:461.5px;" width="10" height="17" viewBox="0 0 10 17"><path d="M1 1L8.5 8.5L1 16" stroke="#767676" stroke-width="2.2" fill="none"/></svg>
<svg style="left:166px;top:458.5px;" width="28" height="22" viewBox="0 0 28 22"><path d="M0 0H11L14 4.5H28V22H0Z" fill="#aeb9c0"/></svg>
<span class="t" id="t50" style="left:202.9px;top:458.28px;font-size:24px;color:#000;letter-spacing:1.261px;">test</span>
<svg style="left:97px;top:501.5px;" width="10" height="17" viewBox="0 0 10 17"><path d="M1 1L8.5 8.5L1 16" stroke="#767676" stroke-width="2.2" fill="none"/></svg>
<svg style="left:130px;top:498.5px;" width="28" height="22" viewBox="0 0 28 22"><path d="M0 0H11L14 4.5H28V22H0Z" fill="#f5a06a"/></svg>
<span class="t" id="t51" style="left:167px;top:498.28px;font-size:24px;color:#000;letter-spacing:1.423px;">target</span>
<span class="t" id="t52" style="left:128px;top:530.81px;font-size:34px;color:#6fc4e8;font-weight:bold;font-style:italic;letter-spacing:-1px;">m</span>
<span class="t" id="t53" style="left:167px;top:538.28px;font-size:24px;color:#000;letter-spacing:1.048px;">pom.xml</span>
<svg style="left:134px;top:576px;" width="27" height="30" viewBox="0 0 27 30"><path d="M8 0H20V27H0V8Z" fill="#aeb9c0"/><path d="M0 8L8 0V8Z" fill="#fff" opacity="0.55"/><circle cx="20" cy="20" r="9" fill="#fff"/><text x="14" y="29" font-size="19" font-weight="bold" fill="#3fb1e0" font-family="Liberation Sans, sans-serif">?</text></svg>
<span class="t" id="t54" style="left:167px;top:578.28px;font-size:24px;color:#000;letter-spacing:1.304px;">test.out</span>
<svg style="left:61px;top:621.5px;" width="10" height="17" viewBox="0 0 10 17"><path d="M1 1L8.5 8.5L1 16" stroke="#767676" stroke-width="2.2" fill="none"/></svg>
<svg style="left:94px;top:617px;" width="28" height="24" viewBox="0 0 28 24"><rect x="0" y="5" width="4.6" height="19" fill="#aeb9c0"/><rect x="6.5" y="5" width="4.6" height="19" fill="#62b543"/><rect x="13" y="0" width="3.6" height="24" fill="#aeb9c0"/><rect x="18.5" y="5" width="4" height="19" fill="#3fb1e0"/><rect x="24.4" y="5" width="3.6" height="19" fill="#aeb9c0"/></svg>
<span class="t" id="t55" style="left:130.6px;top:618.28px;font-size:24px;color:#000;letter-spacing:0.363px;">External Libraries</span>
<svg style="left:61px;top:661.5px;" width="10" height="17" viewBox="0 0 10 17"><path d="M1 1L8.5 8.5L1 16" stroke="#767676" stroke-width="2.2" fill="none"/></svg>
<svg style="left:94px;top:657px;" width="31" height="31" viewBox="0 0 31 31"><rect x="0" y="0" width="20" height="18" fill="#aeb9c0"/><path d="M3 4l5 4l-5 4" stroke="#fff" stroke-width="1.6" fill="none"/><circle cx="20" cy="20" r="11.5" fill="#fff"/><circle cx="20" cy="20" r="10" fill="#3fb1e0"/><path d="M20 14v7l4 3" stroke="#fff" stroke-width="2.2" fill="none"/></svg>
<span class="t" id="t56" style="left:130.6px;top:658.28px;font-size:24px;color:#000;letter-spacing:0.421px;">Scratches and Consoles</span>
<div style="left:488px;top:116px;width:2353px;height:53px;background:#efeed6;"></div>
<div style="left:2760px;top:116px;width:81px;height:53px;background:linear-gradient(90deg, rgba(242,242,242,0) 0%, #f2f2f2 38%);"></div>
<div style="left:488px;top:168.5px;width:2353px;height:1.5px;background:#d1d1d1;"></div>
<div style="left:488px;top:116px;width:192px;height:53px;background:#fff;"></div>
<div style="left:488px;top:163.8px;width:192px;height:5.4px;background:#9ca8bc;"></div>
<svg style="left:506px;top:128px;" width="28" height="28" viewBox="0 0 28 28"><circle cx="14" cy="14" r="14" fill="#8fd3ec"/><text x="13.6" y="19.8" text-anchor="middle" font-size="16.2" fill="#3d4f59" stroke="#3d4f59" stroke-width="0.5" font-family="Liberation Sans, sans-serif">C</text><path d="M20 -2.2L20 11.5L30.3 4.8Z" fill="#5fb545"/></svg>
<span class="t" id="t57" style="left:544px;top:132.28px;font-size:24px;color:#000;letter-spacing:0.260px;">cc6.java</span>
<svg style="left:648.5px;top:134.5px;" width="15" height="15" viewBox="0 0 15 15"><path d="M0.5 0.5L14.5 14.5M14.5 0.5L0.5 14.5" stroke="#b4b9b6" stroke-width="1.9"/></svg>
<svg style="left:696px;top:128px;" width="28" height="28" viewBox="0 0 28 28"><circle cx="14" cy="14" r="14" fill="#8ccfe2"/><text x="13.6" y="19.8" text-anchor="middle" font-size="16.2" fill="#3d4f59" stroke="#3d4f59" stroke-width="0.5" font-family="Liberation Sans, sans-serif">C</text><rect x="20" y="22" width="10" height="7.8" fill="#9aa7b0"/><path d="M22.4 22V19.2a2.6 2.6 0 0 1 5.2 0V22" stroke="#9aa7b0" stroke-width="1.9" fill="none"/></svg>
<span class="t" id="t58" style="left:734.6px;top:132.28px;font-size:24px;color:#000;letter-spacing:0.564px;">ChainedTransformer.class</span>
<svg style="left:1040.5px;top:134.5px;" width="15" height="15" viewBox="0 0 15 15"><path d="M0.5 0.5L14.5 14.5M14.5 0.5L0.5 14.5" stroke="#b4b9b6" stroke-width="1.9"/></svg>
<svg style="left:1087.8px;top:128px;" width="28" height="28" viewBox="0 0 28 28"><defs><clipPath id="cpa"><circle cx="14" cy="14" r="14"/></clipPath></defs><g clip-path="url(#cpa)"><rect x="0" y="0" width="28" height="28" fill="#a3b0b6"/><rect x="4.3" y="0" width="19.6" height="28" fill="#efeed6"/><rect x="6.1" y="0" width="16" height="28" fill="#8ccfe2"/></g><text x="13.6" y="19.8" text-anchor="middle" font-size="16.2" fill="#3d4f59" stroke="#3d4f59" stroke-width="0.5" font-family="Liberation Sans, sans-serif">C</text><rect x="20" y="22" width="10" height="7.8" fill="#9aa7b0"/><path d="M22.4 22V19.2a2.6 2.6 0 0 1 5.2 0V22" stroke="#9aa7b0" stroke-width="1.9" fill="none"/></svg>
<span class="t" id="t59" style="left:1126.6px;top:132.28px;font-size:24px;color:#000;letter-spacing:0.725px;">AbstractMapDecorator.class</span>
<svg style="left:1459.5px;top:134.5px;" width="15" height="15" viewBox="0 0 15 15"><path d="M0.5 0.5L14.5 14.5M14.5 0.5L0.5 14.5" stroke="#b4b9b6" stroke-width="1.9"/></svg>
<svg style="left:1507.5px;top:128px;" width="28" height="28" viewBox="0 0 28 28"><circle cx="14" cy="14" r="14" fill="#8ccfe2"/><text x="13.6" y="19.8" text-anchor="middle" font-size="16.2" fill="#3d4f59" stroke="#3d4f59" stroke-width="0.5" font-family="Liberation Sans, sans-serif">C</text><rect x="20" y="22" width="10" height="7.8" fill="#9aa7b0"/><path d="M22.4 22V19.2a2.6 2.6 0 0 1 5.2 0V22" stroke="#9aa7b0" stroke-width="1.9" fill="none"/></svg>
<span class="t" id="t60" style="left:1546.5px;top:132.28px;font-size:24px;color:#000;letter-spacing:0.101px;">LazyMap.class</span>
<svg style="left:1720.5px;top:134.5px;" width="15" height="15" viewBox="0 0 15 15"><path d="M0.5 0.5L14.5 14.5M14.5 0.5L0.5 14.5" stroke="#b4b9b6" stroke-width="1.9"/></svg>
<svg style="left:1768px;top:128px;" width="28" height="28" viewBox="0 0 28 28"><circle cx="14" cy="14" r="14" fill="#8ccfe2"/><text x="13.6" y="19.8" text-anchor="middle" font-size="16.2" fill="#3d4f59" stroke="#3d4f59" stroke-width="0.5" font-family="Liberation Sans, sans-serif">C</text><rect x="20" y="22" width="10" height="7.8" fill="#9aa7b0"/><path d="M22.4 22V19.2a2.6 2.6 0 0 1 5.2 0V22" stroke="#9aa7b0" stroke-width="1.9" fill="none"/></svg>
<span class="t" id="t61" style="left:1806.5px;top:132.28px;font-size:24px;color:#000;letter-spacing:0.601px;">TiedMapEntry.class</span>
<svg style="left:2038.5px;top:134.5px;" width="15" height="15" viewBox="0 0 15 15"><path d="M0.5 0.5L14.5 14.5M14.5 0.5L0.5 14.5" stroke="#b4b9b6" stroke-width="1.9"/></svg>
<svg style="left:2086px;top:128px;" width="28" height="28" viewBox="0 0 28 28"><circle cx="14" cy="14" r="14" fill="#8ccfe2"/><text x="13.6" y="19.8" text-anchor="middle" font-size="16.2" fill="#3d4f59" stroke="#3d4f59" stroke-width="0.5" font-family="Liberation Sans, sans-serif">C</text><rect x="20" y="22" width="10" height="7.8" fill="#9aa7b0"/><path d="M22.4 22V19.2a2.6 2.6 0 0 1 5.2 0V22" stroke="#9aa7b0" stroke-width="1.9" fill="none"/></svg>
<span class="t" id="t62" style="left:2124.4px;top:132.28px;font-size:24px;color:#000;letter-spacing:0.317px;">HashSet.java</span>
<svg style="left:2284.5px;top:134.5px;" width="15" height="15" viewBox="0 0 15 15"><path d="M0.5 0.5L14.5 14.5M14.5 0.5L0.5 14.5" stroke="#b4b9b6" stroke-width="1.9"/></svg>
<svg style="left:2332px;top:128px;" width="28" height="28" viewBox="0 0 28 28"><circle cx="14" cy="14" r="14" fill="#8ccfe2"/><text x="13.6" y="19.8" text-anchor="middle" font-size="16.2" fill="#3d4f59" stroke="#3d4f59" stroke-width="0.5" font-family="Liberation Sans, sans-serif">C</text><rect x="20" y="22" width="10" height="7.8" fill="#9aa7b0"/><path d="M22.4 22V19.2a2.6 2.6 0 0 1 5.2 0V22" stroke="#9aa7b0" stroke-width="1.9" fill="none"/></svg>
<span class="t" id="t63" style="left:2370px;top:132.28px;font-size:24px;color:#000;letter-spacing:0.375px;">ObjectStreamClass.java</span>
<svg style="left:2650.1px;top:134.5px;" width="15" height="15" viewBox="0 0 15 15"><path d="M0.5 0.5L14.5 14.5M14.5 0.5L0.5 14.5" stroke="#b4b9b6" stroke-width="1.9"/></svg>
<svg style="left:2698px;top:128px;" width="28" height="28" viewBox="0 0 28 28"><circle cx="14" cy="14" r="14" fill="#8ccfe2"/><text x="13.6" y="19.8" text-anchor="middle" font-size="16.2" fill="#3d4f59" stroke="#3d4f59" stroke-width="0.5" font-family="Liberation Sans, sans-serif">C</text><rect x="20" y="22" width="10" height="7.8" fill="#9aa7b0"/><path d="M22.4 22V19.2a2.6 2.6 0 0 1 5.2 0V22" stroke="#9aa7b0" stroke-width="1.9" fill="none"/></svg>
<span class="t" id="t64" style="left:2737px;top:132.28px;font-size:24px;color:#000;width:48px;overflow:hidden;-webkit-mask-image:linear-gradient(90deg,#000 40%,transparent 100%);mask-image:linear-gradient(90deg,#000 40%,transparent 100%);">HashSet</span>
<svg style="left:2800px;top:136px;" width="24" height="13" viewBox="0 0 24 13"><path d="M1.5 1.5L12 11.5L22.5 1.5" stroke="#5a5a5a" stroke-width="2.4" fill="none"/></svg>
<div style="left:488px;top:170px;width:2353px;height:958px;background:#fff;overflow:hidden;"><div style="left:0px;top:0px;width:115px;height:958px;background:#f2f2f2;"></div>
<div style="left:115px;top:0px;width:1.5px;height:958px;background:#d9d9d9;"></div>
<div style="left:0px;top:810px;width:115px;height:44px;background:#fcfaed;"></div>
<div style="left:116.5px;top:810px;width:2237px;height:44px;background:#fcfaed;"></div>
<div style="left:188px;top:0px;width:1.2px;height:958px;background:#e4e4e4;"></div>
<div style="left:2048px;top:0px;width:1.3px;height:958px;background:#dcdcdc;"></div>
<div style="left:252.5px;top:150px;width:1.2px;height:176px;background:#d8d8d8;"></div>
<span class="t" style="left:10.5px;top:-15.4px;font-family:'DejaVu Sans Mono', 'Liberation Mono', 'Noto Sans CJK SC', monospace;font-size:25.5px;letter-spacing:-0.9px;color:#adadad;">18</span>
<span class="t" style="left:10.5px;top:28.6px;font-family:'DejaVu Sans Mono', 'Liberation Mono', 'Noto Sans CJK SC', monospace;font-size:25.5px;letter-spacing:-0.9px;color:#adadad;">19</span>
<span class="t" style="left:10.5px;top:72.6px;font-family:'DejaVu Sans Mono', 'Liberation Mono', 'Noto Sans CJK SC', monospace;font-size:25.5px;letter-spacing:-0.9px;color:#adadad;">20</span>
<span class="t" style="left:10.5px;top:116.6px;font-family:'DejaVu Sans Mono', 'Liberation Mono', 'Noto Sans CJK SC', monospace;font-size:25.5px;letter-spacing:-0.9px;color:#adadad;">21</span>
<span class="t" style="left:10.5px;top:160.6px;font-family:'DejaVu Sans Mono', 'Liberation Mono', 'Noto Sans CJK SC', monospace;font-size:25.5px;letter-spacing:-0.9px;color:#adadad;">22</span>
<span class="t" style="left:10.5px;top:204.6px;font-family:'DejaVu Sans Mono', 'Liberation Mono', 'Noto Sans CJK SC', monospace;font-size:25.5px;letter-spacing:-0.9px;color:#adadad;">23</span>
<span class="t" style="left:10.5px;top:248.6px;font-family:'DejaVu Sans Mono', 'Liberation Mono', 'Noto Sans CJK SC', monospace;font-size:25.5px;letter-spacing:-0.9px;color:#adadad;">24</span>
<span class="t" style="left:10.5px;top:292.6px;font-family:'DejaVu Sans Mono', 'Liberation Mono', 'Noto Sans CJK SC', monospace;font-size:25.5px;letter-spacing:-0.9px;color:#adadad;">25</span>
<span class="t" style="left:10.5px;top:336.6px;font-family:'DejaVu Sans Mono', 'Liberation Mono', 'Noto Sans CJK SC', monospace;font-size:25.5px;letter-spacing:-0.9px;color:#adadad;">26</span>
<span class="t" style="left:10.5px;top:380.6px;font-family:'DejaVu Sans Mono', 'Liberation Mono', 'Noto Sans CJK SC', monospace;font-size:25.5px;letter-spacing:-0.9px;color:#adadad;">27</span>
<span class="t" style="left:10.5px;top:424.6px;font-family:'DejaVu Sans Mono', 'Liberation Mono', 'Noto Sans CJK SC', monospace;font-size:25.5px;letter-spacing:-0.9px;color:#adadad;">28</span>
<span class="t" style="left:10.5px;top:468.6px;font-family:'DejaVu Sans Mono', 'Liberation Mono', 'Noto Sans CJK SC', monospace;font-size:25.5px;letter-spacing:-0.9px;color:#adadad;">29</span>
<span class="t" style="left:10.5px;top:512.6px;font-family:'DejaVu Sans Mono', 'Liberation Mono', 'Noto Sans CJK SC', monospace;font-size:25.5px;letter-spacing:-0.9px;color:#adadad;">30</span>
<span class="t" style="left:10.5px;top:556.6px;font-family:'DejaVu Sans Mono', 'Liberation Mono', 'Noto Sans CJK SC', monospace;font-size:25.5px;letter-spacing:-0.9px;color:#adadad;">31</span>
<span class="t" style="left:10.5px;top:600.6px;font-family:'DejaVu Sans Mono', 'Liberation Mono', 'Noto Sans CJK SC', monospace;font-size:25.5px;letter-spacing:-0.9px;color:#adadad;">32</span>
<span class="t" style="left:10.5px;top:644.6px;font-family:'DejaVu Sans Mono', 'Liberation Mono', 'Noto Sans CJK SC', monospace;font-size:25.5px;letter-spacing:-0.9px;color:#adadad;">33</span>
<span class="t" style="left:10.5px;top:688.6px;font-family:'DejaVu Sans Mono', 'Liberation Mono', 'Noto Sans CJK SC', monospace;font-size:25.5px;letter-spacing:-0.9px;color:#adadad;">34</span>
<span class="t" style="left:10.5px;top:732.6px;font-family:'DejaVu Sans Mono', 'Liberation Mono', 'Noto Sans CJK SC', monospace;font-size:25.5px;letter-spacing:-0.9px;color:#adadad;">35</span>
<span class="t" style="left:10.5px;top:776.6px;font-family:'DejaVu Sans Mono', 'Liberation Mono', 'Noto Sans CJK SC', monospace;font-size:25.5px;letter-spacing:-0.9px;color:#adadad;">36</span>
<span class="t" style="left:10.5px;top:820.6px;font-family:'DejaVu Sans Mono', 'Liberation Mono', 'Noto Sans CJK SC', monospace;font-size:25.5px;letter-spacing:-0.9px;color:#adadad;">37</span>
<span class="t" style="left:10.5px;top:864.6px;font-family:'DejaVu Sans Mono', 'Liberation Mono', 'Noto Sans CJK SC', monospace;font-size:25.5px;letter-spacing:-0.9px;color:#adadad;">38</span>
<span class="t" style="left:10.5px;top:908.6px;font-family:'DejaVu Sans Mono', 'Liberation Mono', 'Noto Sans CJK SC', monospace;font-size:25.5px;letter-spacing:-0.9px;color:#adadad;">39</span>
<span class="t" style="left:10.5px;top:952.6px;font-family:'DejaVu Sans Mono', 'Liberation Mono', 'Noto Sans CJK SC', monospace;font-size:25.5px;letter-spacing:-0.9px;color:#adadad;">40</span>
<div class="code" style="left:128px;top:18px;">        Transformer <span style="text-decoration:underline wavy #a8d19d 1.4px;text-underline-offset:5px">Testtransformer</span> = <span class="k">new</span> ChainedTransformer(<span class="k">new</span> Transformer[]{});</div>
<div class="code" style="left:128px;top:106px;">        Transformer[] transformers=<span class="k">new</span> Transformer[]{</div>
<div class="code" style="left:128px;top:150px;">                <span class="k">new</span> ConstantTransformer(Runtime.<span class="k">class</span>),</div>
<div class="code" style="left:128px;top:194px;">                <span class="k">new</span> InvokerTransformer(<span class="h" style="width:186px">methodName:</span><span class="s">&quot;getMethod&quot;</span>,<span class="k">new</span> Class[]{String.<span class="k">class</span>,Class[].<span class="k">class</span>},<span class="k">new</span> Object[]{<span class="s">&quot;getRuntime&quot;</span>,<span class="k">new</span> Class[]{String.<span class="k">class</span>}}),</div>
<div class="code" style="left:128px;top:238px;">                <span class="k">new</span> InvokerTransformer(<span class="h" style="width:186px">methodName:</span><span class="s">&quot;invoke&quot;</span>,<span class="k">new</span> Class[]{Object.<span class="k">class</span>,Object[].<span class="k">class</span>},<span class="k">new</span> Object[]{<span class="k">null</span>,<span class="k">new</span> Object[]{}}),</div>
<div class="code" style="left:128px;top:282px;">                <span class="k">new</span> InvokerTransformer(<span class="h" style="width:186px">methodName:</span><span class="s">&quot;exec&quot;</span>,<span class="k">new</span> Class[]{String.<span class="k">class</span>},<span class="k">new</span> Object[]{<span class="s">&quot;calc&quot;</span>})</div>
<div class="code" style="left:128px;top:326px;">        };</div>
<div class="code" style="left:128px;top:414px;">        <span class="w">Map</span> map=<span class="k">new</span> <span class="w">HashMap</span>();</div>
<div class="code" style="left:128px;top:458px;">        <span class="w">Map</span> lazyMap=LazyMap.<i>decorate</i>(map,Testtransformer);</div>
<div class="code" style="left:128px;top:502px;">        TiedMapEntry tiedMapEntry=<span class="k">new</span> TiedMapEntry(lazyMap,<span class="h" style="width:65px">key:</span><span class="s">&quot;test1&quot;</span>);</div>
<div class="code" style="left:128px;top:590px;">        <span class="w">HashSet</span> hashSet=<span class="k">new</span> <span class="w">HashSet</span>(<span class="h" style="width:183px">initialCapacity:</span><span class="n">1</span>);</div>
<div class="code" style="left:128px;top:634px;">        <span class="w">hashSet.add</span>(tiedMapEntry);</div>
<div class="code" style="left:128px;top:678px;"><span class="c">//        lazyMap.remove("test1");</span></div>
<div class="code" style="left:128px;top:722px;">        Field key = TiedMapEntry.<span class="k">class</span>.getDeclaredField(<span class="h" style="width:89px">name:</span><span class="s">&quot;key&quot;</span>);</div>
<div class="code" style="left:128px;top:766px;">        key.setAccessible(<span class="k">true</span>);</div>
<div class="code" style="left:128px;top:810px;">        key.set(tiedMapEntry,<span class="s">&quot;test2&quot;</span>);</div>
<div class="code" style="left:128px;top:898px;">        <span class="c">//<span class="zh">通过反射覆盖原本的</span>iTransformers<span class="zh">，防止序列化时在本地执行命令</span></span></div>
<div class="code" style="left:128px;top:942px;">        Field field = ChainedTransformer.<span class="k">class</span>.getDeclaredField(<span class="h" style="width:89px">name:</span><span class="s">&quot;iTransformers&quot;</span>);</div>
<div style="left:230px;top:723px;width:1021px;height:130.5px;box-sizing:border-box;border:2.2px solid #f5221b;border-radius:6px;"></div>
<div style="left:2332px;top:324px;width:20px;height:335px;background:rgba(115,115,115,0.2);"></div>
<div style="left:2324px;top:468.5px;width:28px;height:3.4px;background:#e0bb00;"></div>
<div style="left:2324px;top:484.5px;width:28px;height:3.4px;background:#e0bb00;"></div>
<div style="left:2324px;top:530.5px;width:28px;height:3.4px;background:#e0bb00;"></div>
<div style="left:2324px;top:546.5px;width:28px;height:3.4px;background:#e0bb00;"></div>
<div style="left:128px;top:938px;width:2022px;height:20px;background:rgba(140,140,140,0.27);"></div>
<svg style="left:2152px;top:15px" width="25" height="22" viewBox="0 0 25 22"><path d="M12.5 0L25 21.5H0Z" fill="#e8bf0a"/><rect x="11" y="7" width="3" height="8" fill="#fff"/><rect x="11" y="16.5" width="3" height="3" fill="#fff"/></svg>
<span class="t" style="left:2182.5px;top:14.3px;font-size:25px;color:#6e6e6e;">6</span>
<svg style="left:2212px;top:14px" width="25" height="26" viewBox="0 0 25 26"><path d="M2 10.5L8.5 17L22.5 1.5" stroke="#59a869" stroke-width="4.2" fill="none"/><path d="M1 22l4-3.5l4 3.5l4-3.5l4 3.5l4-3.5l3 2.5" stroke="#59a869" stroke-width="1.5" fill="none"/></svg>
<span class="t" style="left:2242px;top:14.3px;font-size:25px;color:#6e6e6e;">2</span>
<svg style="left:2277px;top:21px" width="18" height="11" viewBox="0 0 18 11"><path d="M1 10L9 2L17 10" stroke="#6e6e6e" stroke-width="2.2" fill="none"/></svg>
<svg style="left:2318.5px;top:22px" width="18" height="11" viewBox="0 0 18 11"><path d="M1 1L9 9L17 1" stroke="#6e6e6e" stroke-width="2.2" fill="none"/></svg></div>
<div style="left:44px;top:1128px;width:2797px;height:2px;background:#d1d1d1;"></div>
<div style="left:44px;top:1130px;width:2797px;height:53px;background:#f4f4f4;"></div>
<div style="left:44px;top:1183px;width:2797px;height:1.4px;background:#d1d1d1;"></div>
<span class="t" id="t65" style="left:56.5px;top:1145.28px;font-size:24px;color:#000;letter-spacing:0.513px;">Run:</span>
<svg style="left:148px;top:1142px;" width="28" height="26" viewBox="0 0 28 26"><path d="M4 0H27.7V19.2H25.6V3H4Z" fill="#ccd3d8"/><rect x="0" y="5.6" width="23.8" height="19.8" fill="#cfd6da"/><rect x="3" y="10.8" width="17.8" height="11.6" fill="#eef7fb"/><rect x="4" y="11.8" width="15.8" height="9.6" fill="#bfe5f4"/></svg>
<span class="t" id="t66" style="left:186px;top:1145.28px;font-size:24px;color:#000;letter-spacing:0.456px;">cc6</span>
<svg style="left:238.5px;top:1150.5px;" width="15" height="15" viewBox="0 0 15 15"><path d="M0.5 0.5L14.5 14.5M14.5 0.5L0.5 14.5" stroke="#a8a8a8" stroke-width="1.9"/></svg>
<div style="left:122px;top:1178.3px;width:154px;height:4.9px;background:#a3adc2;"></div>
<svg style="left:2749px;top:1142.5px;" width="26" height="26" viewBox="0 0 26 26"><g transform="translate(13 13)"><circle r="9.9" fill="#6e6e6e"/><rect x="-3.64" y="-13" width="7.28" height="26" rx="1" transform="rotate(0)" fill="#6e6e6e"/><rect x="-3.64" y="-13" width="7.28" height="26" rx="1" transform="rotate(60)" fill="#6e6e6e"/><rect x="-3.64" y="-13" width="7.28" height="26" rx="1" transform="rotate(120)" fill="#6e6e6e"/><circle r="4.4" fill="#f4f4f4"/></g></svg>
<div style="left:2802px;top:1153.6px;width:24px;height:3.4px;background:#6e6e6e;"></div>
<div style="left:44px;top:1184.4px;width:56px;height:435.6px;background:#f2f2f2;"></div>
<div style="left:99.6px;top:1184.4px;width:2px;height:435.6px;background:#cdcdcd;"></div>
<div style="left:101.4px;top:1184.4px;width:57px;height:435.6px;background:#f2f2f2;"></div>
<div style="left:157.9px;top:1184.4px;width:2px;height:435.6px;background:#cdcdcd;"></div>
<div style="left:159.8px;top:1184.4px;width:2681.2px;height:435.6px;background:#fff;"></div>
<svg style="left:63.5px;top:1200.9816440542697px;" width="21" height="24" viewBox="0 0 21 24"><path d="M0 0L20.5 12L0 24Z" fill="#59a869"/></svg>
<svg style="left:58px;top:1247.6695929768555px;" width="29" height="29" viewBox="0 0 29 29"><path d="M1 23.5L13.5 12a8.5 8.5 0 0 1 10.5-10.5L18.5 7l3 3L27 4.5a8.5 8.5 0 0 1-10.5 10.5L5.5 28Z" fill="#6e6e6e"/></svg>
<div style="left:52px;top:1296.5537110933758px;width:40px;height:2px;background:#cecece;"></div>
<div style="left:62px;top:1320.295291300878px;width:20px;height:20px;background:#c2c2c2;"></div>
<svg style="left:58px;top:1370.1755786113329px;" width="28" height="24" viewBox="0 0 28 24"><path d="M0 4.5h7l2.5-4.5h9l2.5 4.5h7V24H0Z" fill="#c2c2c2"/><circle cx="14" cy="14" r="6" fill="#f2f2f2"/><circle cx="14" cy="14" r="3.2" fill="#c2c2c2"/></svg>
<svg style="left:59.7px;top:1419.7px;" width="29" height="30" viewBox="0 0 29 30"><path d="M6 0.8L11.3 5.5M18 0.8L12.7 5.5" stroke="#c2c2c2" stroke-width="3" fill="none"/><path d="M0 8.5H24V12H21.5V19L12 28H7.5V26H0V22.5H7.5V19H0V15.5H7.5V12H0Z" fill="#c2c2c2"/><rect x="11" y="14" width="5" height="0" fill="#f2f2f2"/><path d="M14 29.5L27 16.5" stroke="#f2f2f2" stroke-width="8"/><path d="M15.5 28.5L25 19" stroke="#c2c2c2" stroke-width="3.6"/><path d="M19.5 16.3H28.7V25.5Z" fill="#c2c2c2"/></svg>
<svg style="left:57.9px;top:1472px;" width="28" height="28" viewBox="0 0 28 28"><path d="M6.8 8.5V2.7H25.6V25.3H6.8V19.8" fill="none" stroke="#c2c2c2" stroke-width="4"/><rect x="0" y="12.3" width="13" height="3.5" fill="#c2c2c2"/><path d="M12 7.8L20.3 14L12 20.3Z" fill="#c2c2c2"/></svg>
<div style="left:52px;top:1518.2193136472465px;width:40px;height:2px;background:#cecece;"></div>
<svg style="left:60px;top:1542.2px;" width="24" height="20" viewBox="0 0 24 20"><rect x="0" y="0" width="13.6" height="9.4" fill="#6e6e6e"/><rect x="16" y="0" width="8" height="9.4" fill="#6e6e6e"/><rect x="0" y="12.1" width="24" height="7.6" fill="#6e6e6e"/></svg>
<svg style="left:66px;top:1596.2px;" width="15" height="10" viewBox="0 0 15 10"><path d="M1 0.8L5.8 5L1 9.2M8.8 0.8L13.6 5L8.8 9.2" fill="none" stroke="#6e6e6e" stroke-width="2"/></svg>
<svg style="left:120px;top:1200.9816440542697px;" width="20" height="25" viewBox="0 0 20 25"><path d="M10 25V3M1.5 12.5L10 3.5L18.5 12.5" fill="none" stroke="#c2c2c2" stroke-width="4"/></svg>
<svg style="left:120px;top:1252.4581005586592px;" width="20" height="25" viewBox="0 0 20 25"><path d="M10 0V22M1.5 12.5L10 21.5L18.5 12.5" fill="none" stroke="#c2c2c2" stroke-width="4"/></svg>
<svg style="left:118px;top:1304.732641660016px;" width="26" height="29" viewBox="0 0 26 29"><path d="M0 2h24M0 12h18.5a5 5 0 0 1 0 10h-6M0 22h6" fill="none" stroke="#6e6e6e" stroke-width="3.8"/><path d="M16 16v12l-7-6z" fill="#6e6e6e"/></svg>
<div style="left:108px;top:1348.2282521947327px;width:44px;height:44px;background:#d0d0d0;border-radius:6px;"></div>
<svg style="left:118px;top:1355.4110135674382px;" width="24" height="26" viewBox="0 0 24 26"><path d="M0 6h8M0 14h8M0 23.5h24" stroke="#6e6e6e" stroke-width="3.8"/><path d="M18 0v12" stroke="#6e6e6e" stroke-width="3.6"/><path d="M11 9.5h14l-7 8z" fill="#6e6e6e"/></svg>
<svg style="left:116.1px;top:1410.3px;" width="28" height="26" viewBox="0 0 28 26"><rect x="6" y="0" width="15.7" height="4.8" fill="#6e6e6e"/><rect x="0" y="7.9" width="27.8" height="9.7" rx="1.6" fill="#6e6e6e"/><rect x="23.8" y="9.8" width="2" height="2" fill="#f2f2f2"/><rect x="7.1" y="17.5" width="13.5" height="6.8" fill="#f2f2f2" stroke="#6e6e6e" stroke-width="2.2"/></svg>
<svg style="left:120.1px;top:1460px;" width="20" height="26" viewBox="0 0 20 26"><rect x="6.4" y="0" width="7.3" height="3" fill="#6e6e6e"/><rect x="0" y="2.1" width="19.7" height="3.6" fill="#6e6e6e"/><path d="M2.1 7.7H17.7V23.2a2.5 2.5 0 0 1-2.5 2.5H4.6a2.5 2.5 0 0 1-2.5-2.5Z" fill="#6e6e6e"/></svg>
<div style="left:184px;top:1184.4px;width:576px;height:43.6px;background:#edf5e8;"></div>
<span class="t" id="t67" style="left:184.4px;top:1194.50px;font-size:26px;color:#46524b;font-family:'DejaVu Sans Mono', 'Liberation Mono', 'Noto Sans CJK SC', monospace;letter-spacing:0.347px;">D:\Environment\jdk8\bin\java.exe ...</span>
<span class="t" id="t68" style="left:184.4px;top:1281.80px;font-size:26px;color:#00007f;font-family:'DejaVu Sans Mono', 'Liberation Mono', 'Noto Sans CJK SC', monospace;letter-spacing:0.347px;">Process finished with exit code 0</span>
<div style="left:1916px;top:553px;width:644px;height:1066.5px;background:#f3f3f3;border-radius:16px;box-shadow:inset 0 0 0 2px #17888a, 0 6px 40px rgba(0,0,0,0.20), 0 72px 96px rgba(0,0,0,0.18);"><svg style="left:42.5px;top:18px" width="23" height="30" viewBox="0 0 23 30"><rect x="0" y="0" width="23" height="30" rx="2" fill="#8a949e"/><rect x="1.2" y="1.2" width="20.6" height="27.6" fill="#8d97a2"/><rect x="3" y="3" width="17" height="6.5" fill="#3fc3ff"/><rect x="3" y="3" width="17" height="2.5" fill="#8fe0ff"/><g fill="#ccd3da"><rect x="3" y="12" width="4.5" height="4"/><rect x="9.2" y="12" width="4.5" height="4"/><rect x="3" y="17.5" width="4.5" height="4"/><rect x="9.2" y="17.5" width="4.5" height="4"/><rect x="3" y="23" width="4.5" height="4"/><rect x="9.2" y="23" width="4.5" height="4"/><rect x="15.5" y="12" width="4.5" height="4"/></g><rect x="15.5" y="17.5" width="4.5" height="9.5" fill="#0f3a82"/></svg>
<span class="t" style="top:21.04px;font-size:24px;color:#1a1a1a;left:97.5px;font-family:'Noto Sans CJK SC','Liberation Sans',sans-serif;">计算器</span>
<svg style="left:402px;top:31px" width="20" height="3" viewBox="0 0 20 3"><rect width="20" height="2" y="0.3" fill="#111"/></svg>
<svg style="left:494px;top:23.5px" width="20" height="20" viewBox="0 0 20 20"><rect x="1" y="1" width="18" height="18" rx="2.5" fill="none" stroke="#111" stroke-width="1.9"/></svg>
<svg style="left:586px;top:24px" width="20" height="20" viewBox="0 0 20 20"><path d="M1 1L19 19M19 1L1 19" stroke="#111" stroke-width="1.9"/></svg>
<svg style="left:35px;top:102.5px" width="30" height="22" viewBox="0 0 30 22"><path d="M0 1h30M0 10.5h30M0 20h30" stroke="#1a1a1a" stroke-width="1.8"/></svg>
<span class="t" style="top:90.59px;font-size:40.5px;color:#1a1a1a;left:97px;font-family:'Noto Sans CJK SC','Liberation Sans',sans-serif;font-weight:350;">标准</span>
<svg style="left:218px;top:99px" width="28" height="28" viewBox="0 0 28 28"><path d="M0.9 11V4a3 3 0 0 1 3-3H24a3 3 0 0 1 3 3V24a3 3 0 0 1-3 3H16.5" fill="none" stroke="#1a1a1a" stroke-width="1.9"/><path d="M15.2 1V9.5a3 3 0 0 0 3 3H27" fill="none" stroke="#1a1a1a" stroke-width="1.9"/><path d="M0.7 27.3L11 17M0.7 17H11V27.3" fill="none" stroke="#1a1a1a" stroke-width="1.9"/></svg>
<svg style="left:577px;top:96px" width="34" height="34" viewBox="0 0 34 34"><path d="M6.6 7A15 15 0 1 1 2.1 16" fill="none" stroke="#1a1a1a" stroke-width="1.9"/><path d="M3.8 1.3V10.3H12.8" fill="none" stroke="#1a1a1a" stroke-width="1.9"/><path d="M15.6 7.6V18.2H23" fill="none" stroke="#1a1a1a" stroke-width="1.9"/></svg>
<span class="t" style="top:232.53px;font-size:85px;color:#000;left:315.5px;width:300px;text-align:right;-webkit-text-stroke:2.2px #000;transform:scaleX(0.99);transform-origin:100% 50%;">0</span>
<span class="t" style="top:377.23px;font-size:25px;color:#a3a3a3;left:-91px;width:300px;text-align:center;">MC</span>
<span class="t" style="top:377.23px;font-size:25px;color:#a3a3a3;left:14px;width:300px;text-align:center;">MR</span>
<span class="t" style="top:377.23px;font-size:25px;color:#1a1a1a;left:118px;width:300px;text-align:center;">M+</span>
<span class="t" style="top:377.23px;font-size:25px;color:#1a1a1a;left:223px;width:300px;text-align:center;">M−</span>
<span class="t" style="top:377.23px;font-size:25px;color:#1a1a1a;left:326.4000000000001px;width:300px;text-align:center;">MS</span>
<span class="t" style="top:377.23px;font-size:25px;color:#a3a3a3;left:565px;">M</span>
<svg style="left:587.5px;top:384.5px" width="15" height="9" viewBox="0 0 15 9"><path d="M1 1L7.5 7.5L14 1" stroke="#a3a3a3" stroke-width="1.6" fill="none"/></svg>
<div style="left:11px;top:426px;width:151px;height:100px;background:#f9f9f9;border:2px solid #e6e6e6;border-bottom:2px solid #cdcdcd;border-radius:9px;box-sizing:border-box;"></div>
<div style="left:168px;top:426px;width:151px;height:100px;background:#f9f9f9;border:2px solid #e6e6e6;border-bottom:2px solid #cdcdcd;border-radius:9px;box-sizing:border-box;"></div>
<div style="left:325px;top:426px;width:151px;height:100px;background:#f9f9f9;border:2px solid #e6e6e6;border-bottom:2px solid #cdcdcd;border-radius:9px;box-sizing:border-box;"></div>
<div style="left:482px;top:426px;width:151px;height:100px;background:#f9f9f9;border:2px solid #e6e6e6;border-bottom:2px solid #cdcdcd;border-radius:9px;box-sizing:border-box;"></div>
<div style="left:11px;top:532px;width:151px;height:100px;background:#f9f9f9;border:2px solid #e6e6e6;border-bottom:2px solid #cdcdcd;border-radius:9px;box-sizing:border-box;"></div>
<div style="left:168px;top:532px;width:151px;height:100px;background:#f9f9f9;border:2px solid #e6e6e6;border-bottom:2px solid #cdcdcd;border-radius:9px;box-sizing:border-box;"></div>
<div style="left:325px;top:532px;width:151px;height:100px;background:#f9f9f9;border:2px solid #e6e6e6;border-bottom:2px solid #cdcdcd;border-radius:9px;box-sizing:border-box;"></div>
<div style="left:482px;top:532px;width:151px;height:100px;background:#f9f9f9;border:2px solid #e6e6e6;border-bottom:2px solid #cdcdcd;border-radius:9px;box-sizing:border-box;"></div>
<div style="left:11px;top:638px;width:151px;height:100px;background:#ffffff;border:2px solid #e6e6e6;border-bottom:2px solid #cdcdcd;border-radius:9px;box-sizing:border-box;"></div>
<div style="left:168px;top:638px;width:151px;height:100px;background:#ffffff;border:2px solid #e6e6e6;border-bottom:2px solid #cdcdcd;border-radius:9px;box-sizing:border-box;"></div>
<div style="left:325px;top:638px;width:151px;height:100px;background:#ffffff;border:2px solid #e6e6e6;border-bottom:2px solid #cdcdcd;border-radius:9px;box-sizing:border-box;"></div>
<div style="left:482px;top:638px;width:151px;height:100px;background:#f9f9f9;border:2px solid #e6e6e6;border-bottom:2px solid #cdcdcd;border-radius:9px;box-sizing:border-box;"></div>
<div style="left:11px;top:744px;width:151px;height:100px;background:#ffffff;border:2px solid #e6e6e6;border-bottom:2px solid #cdcdcd;border-radius:9px;box-sizing:border-box;"></div>
<div style="left:168px;top:744px;width:151px;height:100px;background:#ffffff;border:2px solid #e6e6e6;border-bottom:2px solid #cdcdcd;border-radius:9px;box-sizing:border-box;"></div>
<div style="left:325px;top:744px;width:151px;height:100px;background:#ffffff;border:2px solid #e6e6e6;border-bottom:2px solid #cdcdcd;border-radius:9px;box-sizing:border-box;"></div>
<div style="left:482px;top:744px;width:151px;height:100px;background:#f9f9f9;border:2px solid #e6e6e6;border-bottom:2px solid #cdcdcd;border-radius:9px;box-sizing:border-box;"></div>
<div style="left:11px;top:850px;width:151px;height:100px;background:#ffffff;border:2px solid #e6e6e6;border-bottom:2px solid #cdcdcd;border-radius:9px;box-sizing:border-box;"></div>
<div style="left:168px;top:850px;width:151px;height:100px;background:#ffffff;border:2px solid #e6e6e6;border-bottom:2px solid #cdcdcd;border-radius:9px;box-sizing:border-box;"></div>
<div style="left:325px;top:850px;width:151px;height:100px;background:#ffffff;border:2px solid #e6e6e6;border-bottom:2px solid #cdcdcd;border-radius:9px;box-sizing:border-box;"></div>
<div style="left:482px;top:850px;width:151px;height:100px;background:#f9f9f9;border:2px solid #e6e6e6;border-bottom:2px solid #cdcdcd;border-radius:9px;box-sizing:border-box;"></div>
<div style="left:11px;top:956px;width:151px;height:100px;background:#ffffff;border:2px solid #e6e6e6;border-bottom:2px solid #cdcdcd;border-radius:9px;box-sizing:border-box;"></div>
<div style="left:168px;top:956px;width:151px;height:100px;background:#ffffff;border:2px solid #e6e6e6;border-bottom:2px solid #cdcdcd;border-radius:9px;box-sizing:border-box;"></div>
<div style="left:325px;top:956px;width:151px;height:100px;background:#ffffff;border:2px solid #e6e6e6;border-bottom:2px solid #cdcdcd;border-radius:9px;box-sizing:border-box;"></div>
<div style="left:481px;top:955px;width:153px;height:102px;background:#005a5e;border:1.4px solid #00565a;border-radius:9px;box-sizing:border-box;"></div>
<span class="t" style="top:461.75px;font-size:31px;color:#1a1a1a;left:-63.5px;width:300px;text-align:center;transform:scaleX(0.92);">%</span>
<span class="t" style="top:465.64px;font-size:27px;color:#1a1a1a;left:93.5px;width:300px;text-align:center;transform:scaleX(0.86);">CE</span>
<span class="t" style="top:465.64px;font-size:27px;color:#1a1a1a;left:250.5px;width:300px;text-align:center;transform:scaleX(0.86);">C</span>
<svg style="left:542.5px;top:464.0px" width="30" height="22" viewBox="0 0 30 22"><path d="M9.5 1H25.5a3.5 3.5 0 0 1 3.5 3.5V17.5a3.5 3.5 0 0 1-3.5 3.5H9.5L1 11Z" fill="none" stroke="#1a1a1a" stroke-width="1.9" stroke-linejoin="round"/><path d="M13.5 6.5l9 9M22.5 6.5l-9 9" stroke="#1a1a1a" stroke-width="1.9"/></svg>
<span class="t" style="top:566.91px;font-size:19px;color:#1a1a1a;left:70.79999999999995px;">1</span>
<svg style="left:75.5px;top:570px" width="15" height="23" viewBox="0 0 15 23"><path d="M13.6 0.6L0.8 21.7" stroke="#1a1a1a" stroke-width="1.9"/></svg>
<span class="t" style="top:565.33px;font-size:31.5px;color:#1a1a1a;left:86px;font-family:'Liberation Serif','DejaVu Serif',serif;font-style:italic;">x</span>
<span class="t" style="top:565.33px;font-size:31.5px;color:#1a1a1a;left:229.5px;font-family:'Liberation Serif','DejaVu Serif',serif;font-style:italic;">x</span>
<span class="t" style="top:566.41px;font-size:19px;color:#1a1a1a;left:247.80000000000018px;">2</span>
<span class="t" style="top:565.84px;font-size:18.5px;color:#1a1a1a;left:384px;">2</span>
<svg style="left:387px;top:571px" width="31" height="24" viewBox="0 0 31 24"><path d="M0.6 14.4L3 13L7.3 22L12.600 1.500H29.500" fill="none" stroke="#1a1a1a" stroke-width="1.800"/></svg>
<span class="t" style="top:565.33px;font-size:31.5px;color:#1a1a1a;left:401.8000000000002px;font-family:'Liberation Serif','DejaVu Serif',serif;font-style:italic;">x</span>
<svg style="left:543.0px;top:570.5px" width="28" height="20" viewBox="0 0 28 20"><path d="M0 10h28" stroke="#1a1a1a" stroke-width="1.8"/><circle cx="14" cy="1.8" r="1.8" fill="#1a1a1a"/><circle cx="14" cy="18.2" r="1.8" fill="#1a1a1a"/></svg>
<span class="t" style="top:673.37px;font-size:35px;color:#1a1a1a;left:-63.5px;width:300px;text-align:center;">7</span>
<span class="t" style="top:673.37px;font-size:35px;color:#1a1a1a;left:93.5px;width:300px;text-align:center;">8</span>
<span class="t" style="top:673.37px;font-size:35px;color:#1a1a1a;left:250.5px;width:300px;text-align:center;">9</span>
<span class="t" style="top:779.37px;font-size:35px;color:#1a1a1a;left:-63.5px;width:300px;text-align:center;">4</span>
<span class="t" style="top:779.37px;font-size:35px;color:#1a1a1a;left:93.5px;width:300px;text-align:center;">5</span>
<span class="t" style="top:779.37px;font-size:35px;color:#1a1a1a;left:250.5px;width:300px;text-align:center;">6</span>
<span class="t" style="top:885.37px;font-size:35px;color:#1a1a1a;left:-63.5px;width:300px;text-align:center;">1</span>
<span class="t" style="top:885.37px;font-size:35px;color:#1a1a1a;left:93.5px;width:300px;text-align:center;">2</span>
<span class="t" style="top:885.37px;font-size:35px;color:#1a1a1a;left:250.5px;width:300px;text-align:center;">3</span>
<span class="t" style="top:991.37px;font-size:35px;color:#1a1a1a;left:93.5px;width:300px;text-align:center;">0</span>
<svg style="left:547.0px;top:676.0px" width="20" height="20" viewBox="0 0 20 20"><path d="M1 1L19 19M19 1L1 19" stroke="#1a1a1a" stroke-width="1.8"/></svg>
<svg style="left:546.0px;top:791.0px" width="22" height="3" viewBox="0 0 22 3"><path d="M0 1.2h22" stroke="#1a1a1a" stroke-width="1.9"/></svg>
<svg style="left:545.0px;top:886.0px" width="24" height="24" viewBox="0 0 24 24"><path d="M0 12h24M12 0v24" stroke="#1a1a1a" stroke-width="1.9"/></svg>
<svg style="left:543.5px;top:999.0px" width="28" height="13" viewBox="0 0 28 13"><path d="M0 1.2h28M0 11.5h28" stroke="#fff" stroke-width="2.1"/></svg>
<svg style="left:70.5px;top:992.0px" width="32" height="26" viewBox="0 0 32 26"><path d="M0 7h12M6 1v12M24 1L11 25M21 20.5h11" stroke="#1a1a1a" stroke-width="1.8" fill="none"/></svg>
<div style="left:398.1999999999998px;top:1015.5px;width:4.6px;height:4.6px;background:#1a1a1a;border-radius:50%;"></div></div>
</body></html>
